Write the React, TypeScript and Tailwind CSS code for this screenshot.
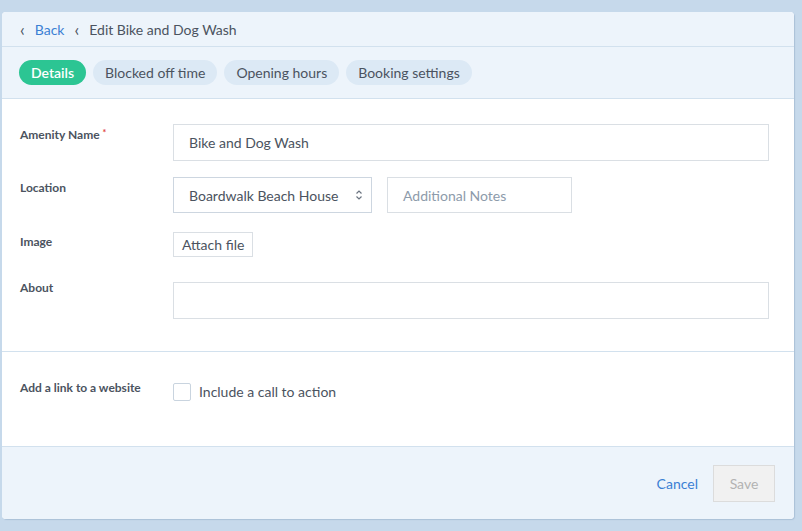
export default function App() {
  const tabs = ["Blocked off time", "Opening hours", "Booking settings"];

  return (
    <div
      className="h-[531px] w-[802px] bg-[#c6d9eb] pl-[2px] pt-[12px] text-[#4b5360]"
      style={{ fontFamily: "Lato, 'Open Sans', sans-serif" }}
    >
      <div className="flex h-[507px] w-[792px] flex-col overflow-hidden rounded-[4px] bg-white shadow-[1px_1px_1px_rgba(120,150,180,0.35)]">
        <div className="bg-[#edf4fb]">
          <div className="flex h-[35px] items-center gap-[10px] border-b border-[#d2e1ee] pl-[18px] text-[14px]">
            <span className="text-[17px] leading-none text-[#4b5360]">‹</span>
            <span className="text-[#3b7fd4]">Back</span>
            <span className="text-[17px] leading-none text-[#4b5360]">‹</span>
            <span>Edit Bike and Dog Wash</span>
          </div>
          <div className="flex h-[52px] items-center gap-[7px] border-b border-[#d2e1ee] pl-[17px] text-[14px]">
            <span className="flex h-[25px] items-center rounded-full bg-[#2cc593] px-[12px] font-semibold text-white">
              Details
            </span>
            {tabs.map((t) => (
              <span key={t} className="flex h-[25px] items-center rounded-full bg-[#dce9f5] px-[12px]">
                {t}
              </span>
            ))}
          </div>
        </div>

        <div className="grid grid-cols-[153px_1fr] items-start gap-y-[16px] border-b border-[#d2e1ee] pb-[32px] pl-[18px] pr-[25px] pt-[25px] text-[14px]">
          <div className="pt-[2px] text-[12px] font-bold text-[#4b5360]">
            Amenity Name <span className="align-top text-[9px] text-[#e0453a]">*</span>
          </div>
          <div className="flex h-[37px] items-center border border-[#dadfe4] px-[15px]">Bike and Dog Wash</div>

          <div className="pt-[2px] text-[12px] font-bold">Location</div>
          <div className="flex gap-[15px]">
            <div className="flex h-[36px] w-[199px] items-center justify-between border border-[#cdd6e0] pl-[15px] pr-[8px]">
              <span>Boardwalk Beach House</span>
              <svg width="8" height="12" viewBox="0 0 8 12" fill="none" stroke="#6b7480" strokeWidth="1.2">
                <path d="M1.5 4.5 4 2l2.5 2.5M1.5 7.5 4 10l2.5-2.5" />
              </svg>
            </div>
            <div className="flex h-[36px] w-[185px] items-center border border-[#dadfe4] px-[15px] text-[#8d9bab]">
              Additional Notes
            </div>
          </div>

          <div className="pt-[4px] text-[12px] font-bold">Image</div>
          <div className="pt-[3px]">
            <span className="inline-flex h-[25px] items-center border border-[#dadfe4] px-[8px]">Attach file</span>
          </div>

          <div className="pt-[6px] text-[12px] font-bold">About</div>
          <div className="mt-[9px] h-[37px] border border-[#dadfe4]" />
        </div>

        <div className="grid h-[95px] grid-cols-[153px_1fr] items-start border-b border-[#d2e1ee] pl-[18px] pt-[29px] text-[14px]">
          <div className="-mt-[2px] text-[12px] font-bold">Add a link to a website</div>
          <div className="flex items-center gap-[8px]">
            <span className="h-[18px] w-[18px] rounded-[2px] border border-[#c9d4df] bg-white" />
            <span>Include a call to action</span>
          </div>
        </div>

        <div className="flex flex-1 items-center justify-end gap-[15px] bg-[#edf4fb] pr-[19px] text-[14px]">
          <span className="text-[#3b7fd4]">Cancel</span>
          <span className="flex h-[37px] w-[62px] items-center justify-center border border-[#dcdcdc] bg-[#f1f1f1] text-[#b3b3b3]">
            Save
          </span>
        </div>
      </div>
    </div>
  );
}
